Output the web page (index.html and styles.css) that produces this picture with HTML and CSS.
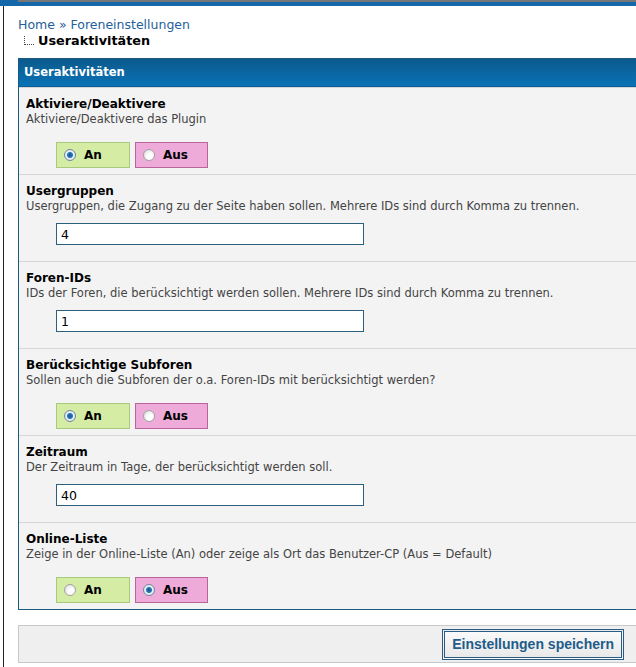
FILE: index.html
```html
<html lang="de">
<head>
    <meta charset="UTF-8">
    <title>Useraktivitäten</title>
    <link rel="stylesheet" href="styles.css">
</head>
<body>
    <div class="topbar"><span class="topbar-corner"></span></div>
    <div class="page">
        <div class="breadcrumb">
            <div class="crumbs"><a href="#">Home</a> &raquo; <a href="#">Foreneinstellungen</a></div>
            <div class="current"><span class="tree"></span>Useraktivitäten</div>
        </div>

        <form class="settings">
            <div class="panel">
                <div class="panel-head">Useraktivitäten</div>

                <div class="row">
                    <div class="row-title">Aktiviere/Deaktivere</div>
                    <div class="row-desc">Aktiviere/Deaktivere das Plugin</div>
                    <div class="choices">
                        <label class="choice yes"><input type="radio" name="active" checked> An</label>
                        <label class="choice no"><input type="radio" name="active"> Aus</label>
                    </div>
                </div>

                <div class="row">
                    <div class="row-title">Usergruppen</div>
                    <div class="row-desc">Usergruppen, die Zugang zu der Seite haben sollen. Mehrere IDs sind durch Komma zu trennen.</div>
                    <input class="text" type="text" value="4">
                </div>

                <div class="row">
                    <div class="row-title">Foren-IDs</div>
                    <div class="row-desc">IDs der Foren, die berücksichtigt werden sollen. Mehrere IDs sind durch Komma zu trennen.</div>
                    <input class="text" type="text" value="1">
                </div>

                <div class="row">
                    <div class="row-title">Berücksichtige Subforen</div>
                    <div class="row-desc">Sollen auch die Subforen der o.a. Foren-IDs mit berücksichtigt werden?</div>
                    <div class="choices">
                        <label class="choice yes"><input type="radio" name="subforums" checked> An</label>
                        <label class="choice no"><input type="radio" name="subforums"> Aus</label>
                    </div>
                </div>

                <div class="row">
                    <div class="row-title">Zeitraum</div>
                    <div class="row-desc">Der Zeitraum in Tage, der berücksichtigt werden soll.</div>
                    <input class="text" type="text" value="40">
                </div>

                <div class="row">
                    <div class="row-title">Online-Liste</div>
                    <div class="row-desc">Zeige in der Online-Liste (An) oder zeige als Ort das Benutzer-CP (Aus = Default)</div>
                    <div class="choices">
                        <label class="choice yes"><input type="radio" name="online"> An</label>
                        <label class="choice no"><input type="radio" name="online" checked> Aus</label>
                    </div>
                </div>
            </div>

            <div class="footer">
                <button type="submit" class="save">Einstellungen speichern</button>
            </div>
        </form>
    </div>
</body>
</html>
```

FILE: styles.css
```css
body {
    margin: 0;
    background: #fff;
    font-family: "DejaVu Sans", Verdana, sans-serif;
    overflow: hidden;
}

.topbar {
    height: 4px;
    border-top: 2px solid #777;
    background: #1467a8;
    display: flex;
}

.topbar-corner {
    width: 18px;
    height: 6px;
    margin-top: -2px;
    background: #1467a8;
}

.page {
    margin-left: 3px;
    border-left: 1px solid #222;
    padding: 11px 0 0 14px;
    min-height: 700px;
}

.breadcrumb {
    font-size: 12.5px;
    line-height: 16px;
}

.crumbs, .crumbs a {
    color: #24609a;
    text-decoration: none;
}

.current {
    display: flex;
    align-items: flex-end;
    font-size: 12.8px;
    font-weight: bold;
    color: #000;
}

.tree {
    width: 9px;
    height: 8px;
    margin: 0 4px 4px 6px;
    border-left: 1px dotted #444;
    border-bottom: 1px dotted #444;
}

.settings {
    margin-top: 9px;
}

.panel {
    border: 1px solid #1d5a82;
    border-right: none;
    background: #f3f3f3;
}

.panel-head {
    height: 27px;
    line-height: 27px;
    padding-left: 5px;
    color: #fff;
    font-size: 11.5px;
    font-weight: bold;
    background: linear-gradient(#0b5a8c, #0a72b6);
    border-bottom: 1px solid #0a5f98;
}

.row {
    padding: 8px 0 0 7px;
    border-top: 1px solid #d6d6d6;
    min-height: 78px;
}

.row:first-of-type {
    border-top: none;
}

.row-title {
    font-size: 12px;
    line-height: 16px;
    font-weight: bold;
    color: #000;
}

.row-desc {
    font-size: 11.5px;
    line-height: 15px;
    color: #444;
}

.text {
    display: block;
    width: 308px;
    height: 22px;
    margin: 9px 0 15px 30px;
    padding: 0 4px;
    box-sizing: border-box;
    border: 1px solid #2d5f7f;
    background: #fff;
    font-family: "DejaVu Sans", sans-serif;
    font-size: 12.5px;
    color: #000;
}

.choices {
    display: flex;
    gap: 5px;
    margin: 15px 0 6px 30px;
}

.choice {
    display: flex;
    align-items: center;
    gap: 8px;
    width: 74px;
    height: 26px;
    padding-left: 7px;
    box-sizing: border-box;
    font-size: 12px;
    font-weight: bold;
    color: #000;
}

.choice.yes {
    background: #d5eca5;
    border: 1px solid #a9c97c;
}

.choice.no {
    background: #eeaad9;
    border: 1px solid #b9649a;
    width: 73px;
}

.choice input {
    appearance: none;
    width: 12px;
    height: 12px;
    margin: 0;
    border-radius: 50%;
    border: 1px solid #a2a2a2;
    background: radial-gradient(circle at 65% 65%, #fff 30%, #d6d6d6 100%);
}

.choice input:checked {
    border-color: #6e8aa3;
    background: radial-gradient(circle, #174f80 0, #2f7fc0 38%, #e8f0f6 48%, #dcdcdc 100%);
}

.footer {
    display: flex;
    justify-content: flex-end;
    align-items: center;
    height: 36px;
    margin-top: 15px;
    padding-right: 12px;
    background: #efefef;
    border: 1px solid #c9c9c9;
    border-right: none;
}

.save {
    height: 31px;
    padding: 0 7px;
    border: 3px double #2b5d84;
    background: linear-gradient(#fafafa, #e8e8e8);
    font-family: "Liberation Sans", Arial, sans-serif;
    font-size: 14px;
    font-weight: bold;
    color: #1f5c8a;
}
```
